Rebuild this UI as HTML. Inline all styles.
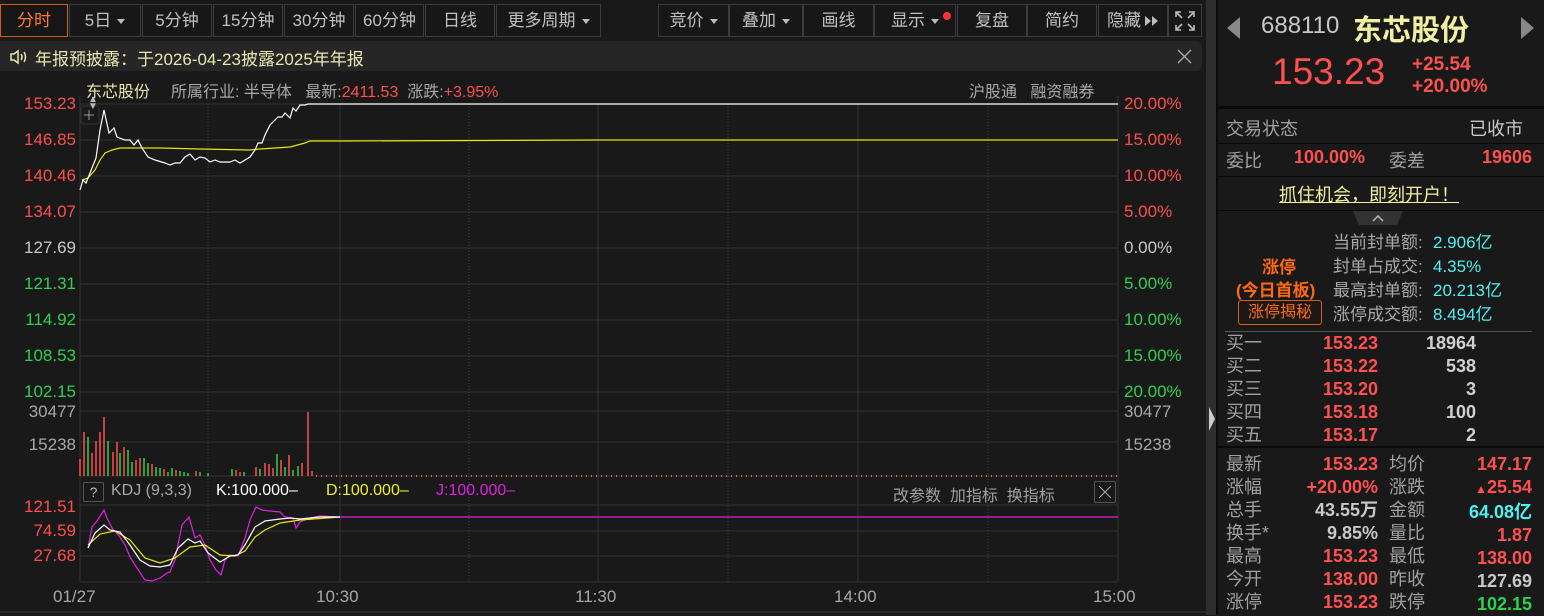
<!DOCTYPE html>
<html><head><meta charset="utf-8">
<style>
*{margin:0;padding:0;box-sizing:border-box}
body{width:1544px;height:615px;background:#191919;overflow:hidden;position:relative;font-family:"Liberation Sans","Noto Sans CJK SC",sans-serif;color:#c8c8c8}
.a{position:absolute;white-space:nowrap}
.btn{position:absolute;top:4px;height:33px;border:1px solid #3c3c3c;background:#171717;color:#c0c0c0;font-size:17px;line-height:31px;text-align:center;white-space:nowrap;overflow:hidden}
.tri{display:inline-block;width:0;height:0;border-left:4px solid transparent;border-right:4px solid transparent;border-top:5px solid #bbb;vertical-align:middle;margin-left:6px}
.lab{font-size:17px;line-height:18px}
.r{color:#ff4d4d}.g{color:#2fcf4f}.w{color:#c8c8c8}.c{color:#4ff0f0}
.rt{text-align:right}
.b{font-weight:bold}
</style></head><body>

<!-- toolbar -->
<div class="btn" style="left:0;width:68px;border-color:#d55a1a;color:#ff7a30">分时</div>
<div class="btn" style="left:69px;width:72px">5日<span class="tri"></span></div>
<div class="btn" style="left:142px;width:70px">5分钟</div>
<div class="btn" style="left:213px;width:70px">15分钟</div>
<div class="btn" style="left:284px;width:70px">30分钟</div>
<div class="btn" style="left:355px;width:69px">60分钟</div>
<div class="btn" style="left:425px;width:70px">日线</div>
<div class="btn" style="left:496px;width:105px">更多周期<span class="tri"></span></div>
<div class="btn" style="left:658px;width:71px">竞价<span class="tri"></span></div>
<div class="btn" style="left:729px;width:74px">叠加<span class="tri"></span></div>
<div class="btn" style="left:803px;width:71px">画线</div>
<div class="btn" style="left:874px;width:82px;overflow:visible">显示<span class="tri"></span><span style="position:absolute;left:68px;top:7px;width:8px;height:8px;border-radius:4px;background:#ff3030"></span></div>
<div class="btn" style="left:957px;width:70px">复盘</div>
<div class="btn" style="left:1027px;width:70px">简约</div>
<div class="btn" style="left:1098px;width:70px;text-align:left;padding-left:8px">隐藏<svg width="14" height="10" style="margin-left:4px"><path d="M0 0L6 5L0 10zM7 0L13 5L7 10z" fill="#bbb"/></svg></div>
<div class="btn" style="left:1168px;width:34px">
<svg width="24" height="24" viewBox="0 0 24 24" style="margin-top:4px" stroke="#bbb" stroke-width="1.6" fill="none"><path d="M3 8V3h5M3 3l6 6M21 8V3h-5M21 3l-6 6M3 16v5h5M3 21l6-6M21 16v5h-5M21 21l-6-6"/></svg></div>

<!-- notice bar -->
<div class="a" style="left:0;top:41px;width:1202px;height:30px;background:#262626;border-radius:0 6px 6px 0"></div>
<svg class="a" style="left:9px;top:49px" width="20" height="16" viewBox="0 0 20 16" fill="none" stroke="#e8e8b0" stroke-width="1.5"><path d="M2 5h3l4-3v12l-4-3H2z"/><path d="M12 5q2 3 0 6M15 3q3 5 0 10"/></svg>
<div class="a" style="left:35px;top:45px;font-size:17px;color:#e8e8b0">年报预披露：于2026-04-23披露2025年年报</div>
<svg class="a" style="left:1177px;top:49px" width="15" height="15" stroke="#aaa" stroke-width="1.3"><path d="M1 1l13 13M14 1L1 14"/></svg>

<!-- chart header -->
<div class="a" style="left:86px;top:78px;font-size:16px;color:#e8e8b0">东芯股份</div>
<div class="a" style="left:171px;top:78px;font-size:16px;color:#a8a8a8">所属行业: 半导体 &nbsp;&nbsp;最新:<span class="r">2411.53</span> &nbsp;涨跌:<span class="r">+3.95%</span></div>
<div class="a" style="left:969px;top:78px;font-size:16px;color:#a8a8a8">沪股通 &nbsp;&nbsp;融资融券</div>

<!-- price axis labels -->
<div class="a rt lab r" style="left:0;width:76px;top:95px">153.23</div>
<div class="a rt lab r" style="left:0;width:76px;top:131px">146.85</div>
<div class="a rt lab r" style="left:0;width:76px;top:167px">140.46</div>
<div class="a rt lab r" style="left:0;width:76px;top:203px">134.07</div>
<div class="a rt lab w" style="left:0;width:76px;top:239px">127.69</div>
<div class="a rt lab g" style="left:0;width:76px;top:275px">121.31</div>
<div class="a rt lab g" style="left:0;width:76px;top:311px">114.92</div>
<div class="a rt lab g" style="left:0;width:76px;top:347px">108.53</div>
<div class="a rt lab g" style="left:0;width:76px;top:383px">102.15</div>
<div class="a lab r" style="left:1124px;top:95px">20.00%</div>
<div class="a lab r" style="left:1124px;top:131px">15.00%</div>
<div class="a lab r" style="left:1124px;top:167px">10.00%</div>
<div class="a lab r" style="left:1124px;top:203px">5.00%</div>
<div class="a lab w" style="left:1124px;top:239px">0.00%</div>
<div class="a lab g" style="left:1124px;top:275px">5.00%</div>
<div class="a lab g" style="left:1124px;top:311px">10.00%</div>
<div class="a lab g" style="left:1124px;top:347px">15.00%</div>
<div class="a lab g" style="left:1124px;top:383px">20.00%</div>
<div class="a lab" style="left:0;width:76px;top:403px;text-align:right;color:#a8a8a8">30477</div>
<div class="a lab" style="left:0;width:76px;top:436px;text-align:right;color:#a8a8a8">15238</div>
<div class="a lab" style="left:1124px;top:403px;color:#a8a8a8">30477</div>
<div class="a lab" style="left:1124px;top:436px;color:#a8a8a8">15238</div>
<div class="a rt lab r" style="left:0;width:76px;top:498px">121.51</div>
<div class="a rt lab r" style="left:0;width:76px;top:522px">74.59</div>
<div class="a rt lab r" style="left:0;width:76px;top:547px">27.68</div>
<div class="a lab" style="left:53px;top:588px;color:#a8a8a8">01/27</div>
<div class="a lab" style="left:316px;top:588px;color:#a8a8a8">10:30</div>
<div class="a lab" style="left:575px;top:588px;color:#a8a8a8">11:30</div>
<div class="a lab" style="left:834px;top:588px;color:#a8a8a8">14:00</div>
<div class="a lab" style="left:1093px;top:588px;color:#a8a8a8">15:00</div>

<svg class="a" style="left:0;top:0" width="1206" height="615">
<g stroke="#333" stroke-width="1">
<path d="M80 104H1118M80 140H1118M80 176H1118M80 212H1118M80 248H1118M80 284H1118M80 320H1118M80 356H1118M80 392H1118"/>
<path d="M80 411H1118M80 442H1118M80 476H1118"/>
<path d="M80 505H1118M80 531H1118M80 556H1118M80 582H1118"/>
<path d="M80 96V582M1118 96V582M340 104V582M598 104V582M858 104V582"/>
<path d="M0 612H1206"/>
</g>
<g stroke="#444" stroke-dasharray="1 2"><path d="M208 104V582M469 104V582M728 104V582M988 104V582"/></g>
<rect x="81" y="106" width="18" height="18" rx="3" fill="none" stroke="#333"/>
<path d="M84 115h10M89 110v10" stroke="#999"/>
<polyline fill="none" stroke="#e8e80a" stroke-width="1.2" points="82,180 88,178 95,170 100,160 105,153 112,150 120,148 130,148 160,148 200,149 250,150 260,149 290,147 305,143 310,141 340,141 598,140 1118,140"/>
<polyline fill="none" stroke="#fff" stroke-width="1.2" points="80,190 83,180 86,183 88,178 92,168 96,158 100,130 104,110 109,133 114,128 117,137 125,140 130,140 134,145 138,140 142,148 148,157 155,160 165,163 170,165 175,163 180,163 185,157 190,154 195,160 200,157 205,158 210,162 215,160 220,162 230,162 235,160 240,163 250,157 255,150 258,143 262,143 265,135 270,125 275,120 278,117 282,117 285,113 290,118 293,108 296,111 300,105 305,105 308,104 1118,104"/>
<g stroke-width="1.5">
<path stroke="#ff5050" d="M80 476V459M84 476V432M92 476V453M96 476V441M100 476V432M104 476V417M113 476V452M117 476V442M124 476V447M136 476V460M140 476V458M152 476V464M164 476V469M176 476V470M196 476V471M236 476V470M240 476V472M256 476V467M265 476V463M269 476V464M273 476V468M281 476V460M289 476V455M302 476V463M308 476V412M312 476V471"/>
<path stroke="#30d050" d="M88 476V437M108 476V441M120 476V453M128 476V450M132 476V462M144 476V458M148 476V463M156 476V467M160 476V468M168 476V472M172 476V468M180 476V471M184 476V472M188 476V473M200 476V472M208 476V473M232 476V469M244 476V472M260 476V469M277 476V454M285 476V467M293 476V470M298 476V466"/>
</g>
<path d="M316 476H1118" stroke="#ff5050" stroke-width="2" stroke-dasharray="1 4"/>
<path d="M350 517H1118" stroke="#e020e0" stroke-width="1.2"/>
<polyline fill="none" stroke="#e020e0" stroke-width="1.2" points="88,548 92,527 97,521 104,510 107,518 112,528 120,537 125,545 130,557 137,568 145,580 152,581 160,578 167,573 170,572 175,560 182,525 189,517 195,538 200,535 205,545 210,560 216,570 221,575 225,560 230,555 238,556 245,538 250,520 256,507 262,510 270,511 280,512 285,517 293,518 296,528 300,522 310,518 320,516 340,517 350,517"/>
<polyline fill="none" stroke="#e8e80a" stroke-width="1.2" points="88,545 100,534 115,531 130,540 145,558 160,563 175,558 190,547 205,545 220,555 235,556 245,551 255,537 265,530 280,523 300,520 340,517"/>
<polyline fill="none" stroke="#fff" stroke-width="1.2" points="88,548 95,533 104,525 110,530 120,532 130,545 140,560 150,566 160,567 170,565 178,548 188,539 195,543 200,541 208,553 220,562 230,556 238,555 245,545 255,527 265,521 280,519 290,518 300,519 320,517 340,517"/>
</svg>
<div class="a" style="top:96px;width:8px;height:14px;color:#bbb;font-size:10px;line-height:7px;left:88px">▲<br>▼</div>

<!-- KDJ header -->
<div class="a" style="left:83px;top:482px;width:21px;height:20px;border:1px solid #555;border-radius:2px;color:#bbb;font-size:14px;text-align:center;line-height:18px">?</div>
<div class="a" style="left:111px;top:482px;font-size:16px;color:#a8a8a8">KDJ (9,3,3)</div>
<div class="a" style="left:216px;top:482px;font-size:16px;color:#fff">K:100.000–</div>
<div class="a" style="left:326px;top:482px;font-size:16px;color:#f0f020">D:100.000–</div>
<div class="a" style="left:436px;top:482px;font-size:16px;color:#e020e0">J:100.000–</div>
<div class="a" style="left:893px;top:482px;font-size:16px;color:#a0a0a0">改参数 &nbsp;加指标 &nbsp;换指标</div>
<div class="a" style="left:1094px;top:481px;width:22px;height:22px;border:1px solid #555;border-radius:2px"></div>
<svg class="a" style="left:1099px;top:486px" width="12" height="12" stroke="#aaa"><path d="M0 0l12 12M12 0L0 12"/></svg>

<!-- splitter -->
<div class="a" style="left:1206px;top:0;width:10px;height:615px;background:#2e2e2e"></div>
<div class="a" style="left:1216px;top:0;width:2px;height:615px;background:#0a0a0a"></div>
<svg class="a" style="left:1208px;top:407px" width="8" height="24"><path d="M1 0L7 12L1 24z" fill="#ccc"/></svg>

<!-- right panel -->
<svg class="a" style="left:1227px;top:17px" width="14" height="22"><path d="M13 0L0 11L13 22z" fill="#888"/></svg>
<svg class="a" style="left:1520px;top:17px" width="14" height="22"><path d="M1 0L14 11L1 22z" fill="#888"/></svg>
<div class="a" style="left:1261px;top:12px;font-size:24px;color:#c8c8c8">688110</div>
<div class="a b" style="left:1353px;top:7px;font-size:29px;color:#f0f0a0">东芯股份</div>
<div class="a" style="left:1272px;top:51px;font-size:37px;color:#ff5050">153.23</div>
<div class="a b" style="left:1412px;top:54px;font-size:19px;color:#ff5050;line-height:22px">+25.54<br>+20.00%</div>
<div class="a" style="left:1218px;top:106px;width:326px;height:3px;background:#0a0a0a"></div>

<div class="a" style="left:1226px;top:115px;font-size:18px;color:#a0a0a0">交易状态</div>
<div class="a" style="left:1469px;top:115px;font-size:18px;color:#c8c8c8">已收市</div>
<div class="a" style="left:1218px;top:143px;width:326px;height:1px;background:#0a0a0a"></div>
<div class="a" style="left:1226px;top:147px;font-size:18px;color:#a0a0a0">委比</div>
<div class="a b" style="left:1294px;top:147px;font-size:18px;color:#ff5050">100.00%</div>
<div class="a" style="left:1389px;top:147px;font-size:18px;color:#a0a0a0">委差</div>
<div class="a b rt" style="left:1440px;width:92px;top:147px;font-size:18px;color:#ff5050">19606</div>
<div class="a" style="left:1218px;top:176px;width:326px;height:1px;background:#0a0a0a"></div>
<div class="a" style="left:1279px;top:181px;font-size:18px;color:#f0f0a0;text-decoration:underline">抓住机会，即刻开户！</div>
<div class="a" style="left:1218px;top:210px;width:326px;height:1px;background:#0a0a0a"></div>
<svg class="a" style="left:1353px;top:211px" width="50" height="15"><path d="M0 0H50L44 14H6z" fill="#333"/><path d="M20 10L25 5L30 10" stroke="#bbb" fill="none" stroke-width="1.5"/></svg>

<div class="a b" style="left:1262px;top:253px;font-size:17px;color:#ff6a10">涨停</div>
<div class="a b" style="left:1236px;top:276px;font-size:17px;color:#ff6a10">(今日首板)</div>
<div class="a" style="left:1238px;top:300px;width:84px;height:25px;border:1px solid #e05a10;border-radius:3px;font-size:16px;color:#ff6a10;text-align:center;line-height:23px">涨停揭秘</div>
<div class="a" style="left:1333px;top:231px;font-size:17px;line-height:24px;color:#a8a8a8">当前封单额:<br>封单占成交:<br>最高封单额:<br>涨停成交额:</div>
<div class="a c" style="left:1433px;top:231px;font-size:17px;line-height:24px">2.906亿<br>4.35%<br>20.213亿<br>8.494亿</div>
<div class="a" style="left:1225px;top:331px;width:307px;height:1px;background:#555"></div>

<div class="a" style="left:1226px;top:332px;font-size:18px;line-height:23px;color:#a0a0a0">买一<br>买二<br>买三<br>买四<br>买五</div>
<div class="a b rt" style="left:1280px;width:98px;top:332px;font-size:18px;line-height:23px;color:#ff5050">153.23<br>153.22<br>153.20<br>153.18<br>153.17</div>
<div class="a b rt" style="left:1380px;width:96px;top:332px;font-size:18px;line-height:23px;color:#d0d0d0">18964<br>538<br>3<br>100<br>2</div>
<div class="a" style="left:1218px;top:446px;width:326px;height:2px;background:#0a0a0a"></div>

<div class="a" style="left:1226px;top:453px;font-size:18px;line-height:23px;color:#a0a0a0">最新<br>涨幅<br>总手<br>换手*<br>最高<br>今开<br>涨停</div>
<div class="a b rt" style="left:1270px;width:108px;top:453px;font-size:18px;line-height:23px;color:#ff5050">153.23<br>+20.00%<br><span class="w">43.55万</span><br><span class="w">9.85%</span><br>153.23<br>138.00<br>153.23</div>
<div class="a" style="left:1389px;top:453px;font-size:18px;line-height:23px;color:#a0a0a0">均价<br>涨跌<br>金额<br>量比<br>最低<br>昨收<br>跌停</div>
<div class="a b rt" style="left:1420px;width:112px;top:453px;font-size:18px;line-height:23px;color:#ff5050">147.17<br><span style="font-size:12px">▲</span>25.54<br><span class="c">64.08亿</span><br>1.87<br>138.00<br><span class="w">127.69</span><br><span class="g">102.15</span></div>
</body></html>
